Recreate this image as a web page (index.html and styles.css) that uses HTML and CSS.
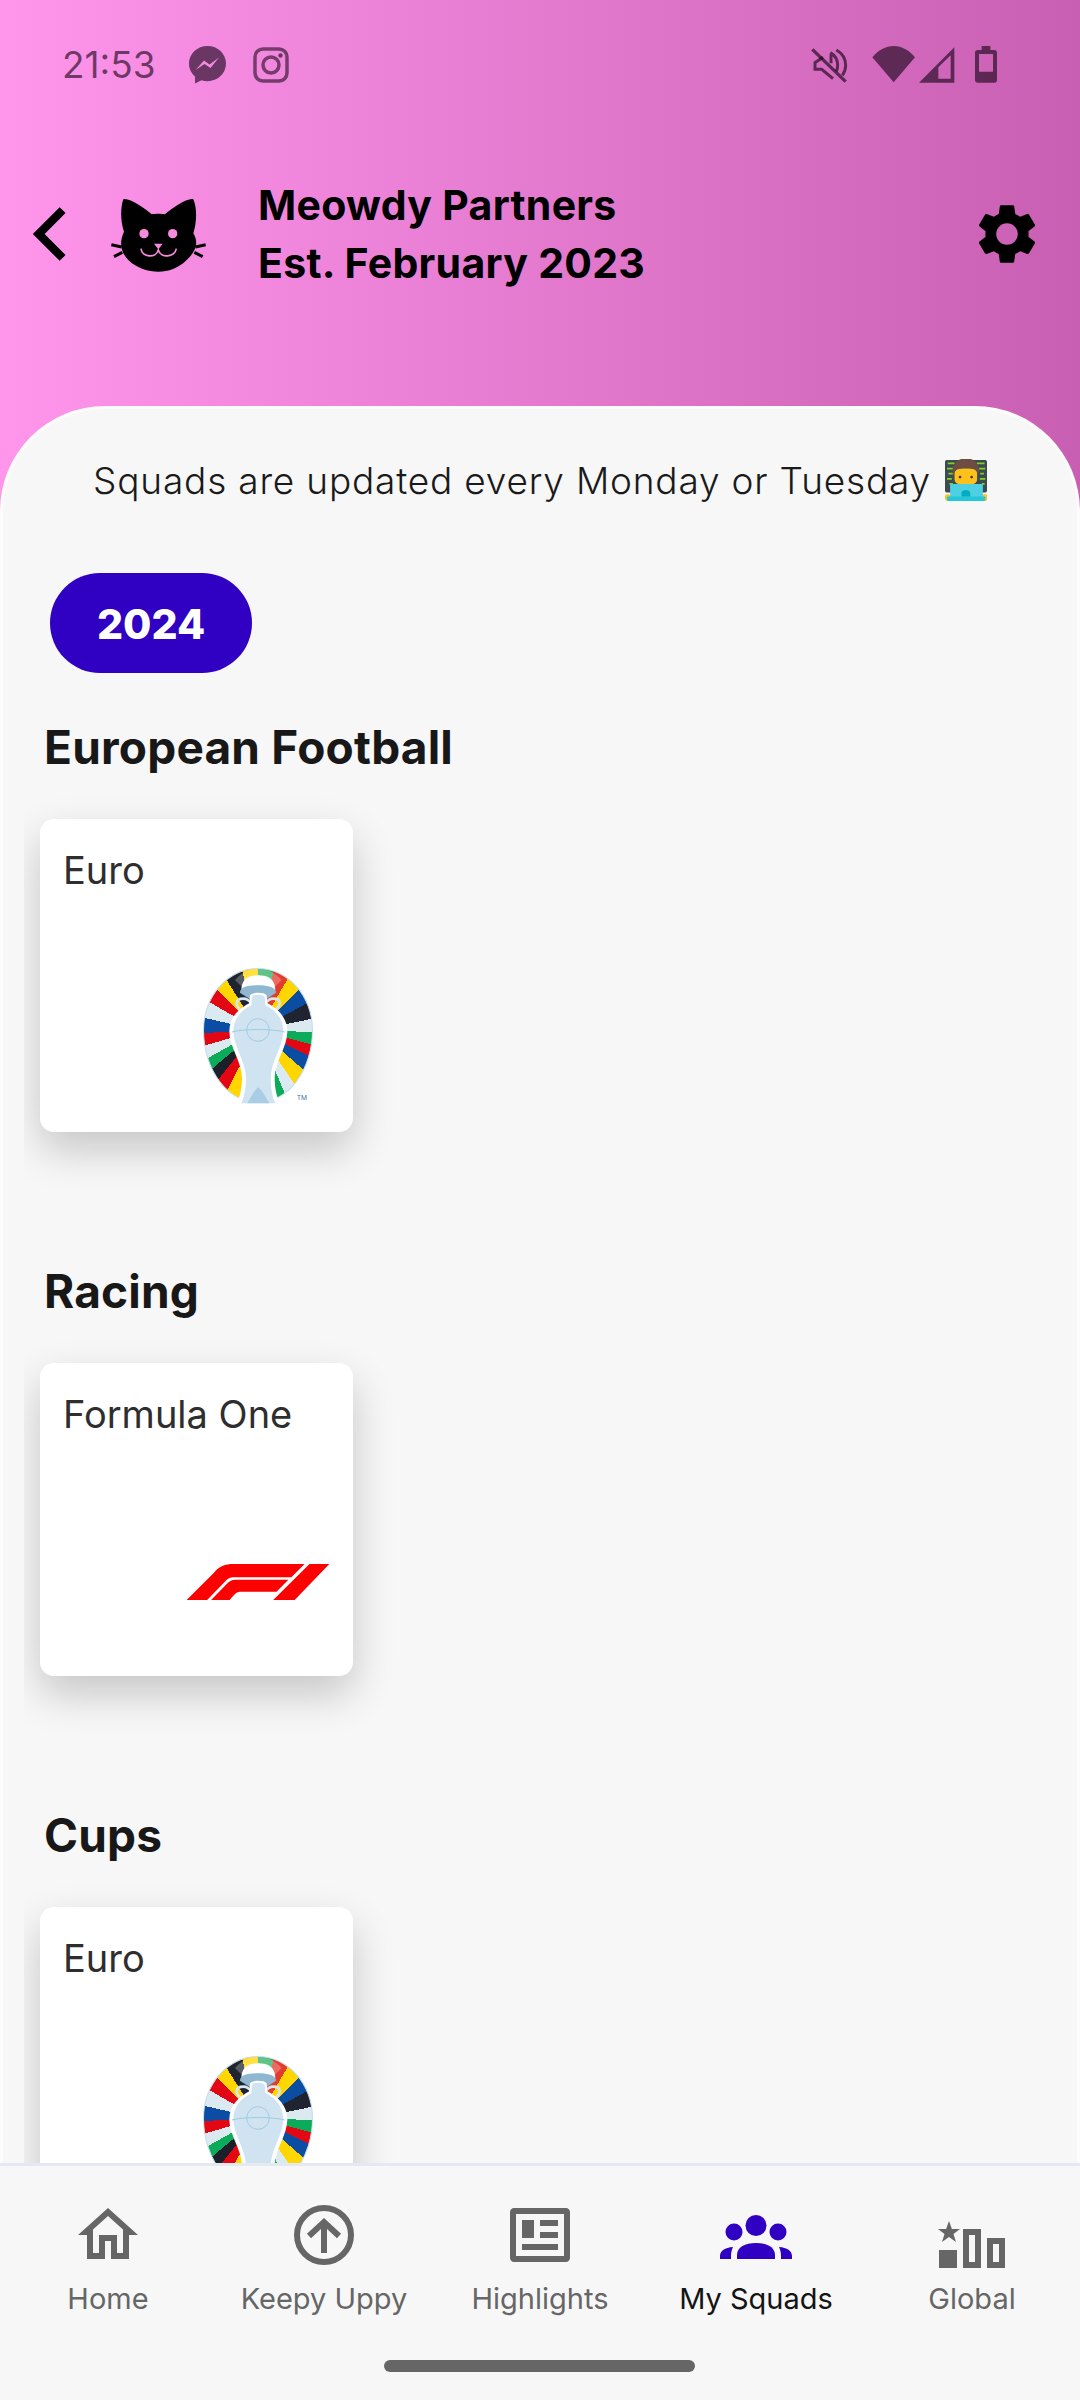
FILE: index.html
```html
<!DOCTYPE html>
<html lang="en">
<head>
<meta charset="utf-8">
<title>Meowdy Partners</title>
<link rel="stylesheet" href="styles.css">
</head>
<body>
<svg class="defs" width="0" height="0" aria-hidden="true">
  <defs>
    <symbol id="f1" viewBox="558 8 432 109">
      <path d="M558 117L640 35C655 15 675 8 700 8H915L875 48H700C690 48 685 50 675 60L620 117Z"/>
      <path d="M632 117L680 68C688 60 695 56 705 56H866L830 92H720C712 92 706 97 700 103L688 117Z"/>
      <path d="M930 8H990L885 117H820Z"/>
    </symbol>
    <symbol id="trophy" viewBox="129 54 330 408">
      <path class="t-wash" d="M225 90C245 66 270 57 294 57C318 57 345 66 365 90L345 110H245Z"/>
      <path class="t-white" d="M244 122C244 88 262 76 294 76C326 76 346 88 346 122Z"/>
      <path class="t-collar" d="M240 128C240 112 262 106 294 106C326 106 348 112 348 128C330 140 322 145 318 150H272C268 145 258 140 240 128Z"/>
      <path class="t-handle" d="M248 182C222 168 226 146 250 146C262 146 268 152 274 160"/>
      <path class="t-handle" d="M342 182C366 168 364 146 340 146C328 146 322 152 316 160"/>
      <path class="t-white" d="M270 136C276 126 314 126 320 136L322 160C354 176 382 204 382 244C382 292 344 336 344 384C344 420 352 446 362 462H228C238 446 246 420 246 384C246 336 208 292 208 244C208 204 236 176 268 160Z"/>
      <path class="t-body" d="M276 140C282 132 308 132 314 140L316 166C346 180 370 206 370 244C370 288 332 336 332 384C332 416 338 442 346 460H244C252 442 258 416 258 384C258 336 220 288 220 244C220 206 244 180 274 166Z"/>
      <path class="t-base" d="M262 460C274 440 284 420 295 412C306 420 316 440 328 460Z"/>
      <circle class="t-line" cx="294" cy="240" r="34"/>
      <path class="t-line" d="M216 246C250 236 340 236 374 246"/>
      <text class="t-tm" x="410" y="449">TM</text>
    </symbol>
  </defs>
</svg>
<div class="screen">
  <header class="hero">
    <div class="status">
      <div class="status-left">
        <span class="time">21:53</span>
        <svg class="st-icon messenger" viewBox="0 0 37 38"><path class="st-fill" d="M18.5 0C8.3 0 0 7.7 0 17.6 0 22.9 2.300 27.400 6 30.500V37.500L12.500 34.200C14.400 34.800 16.400 35.200 18.500 35.200 28.700 35.200 37 27.500 37 17.600 37 7.700 28.700 0 18.500 0Z"/><path class="st-bolt" d="M6.500 24L15 14.500 20.500 18.500 30 11.500 21.500 22 15.500 18Z"/></svg>
        <svg class="st-icon insta" viewBox="0 0 36 36"><rect class="st-stroke" x="2" y="2" width="32" height="32" rx="8"/><circle class="st-stroke" cx="18" cy="18" r="8"/><circle class="st-fill" cx="27.500" cy="8.500" r="2.200"/></svg>
      </div>
      <svg class="sys-icons" viewBox="0 0 660 210">
        <path class="sys-line" d="M40 58L140 155"/>
        <path class="sys-thin" d="M72 82L48 98V118H68L102 146M96 72V100M94 68C108 76 116 90 116 106C116 112 115 118 112 124M112 60C130 70 140 88 140 106C140 118 136 128 130 136"/>
        <path class="st-fill" d="M220 82C238 60 260 48 284 48C308 48 330 60 348 82L284 157Z"/>
        <path class="st-fill" fill-rule="evenodd" d="M360 158L466 52V158ZM418 112V146H455V76Z"/>
        <path class="st-fill" fill-rule="evenodd" d="M548 48H574V60H586C591 60 594 63 594 68V150C594 155 591 158 586 158H536C531 158 528 155 528 150V68C528 63 531 60 536 60H548ZM540 72V125H582V72Z"/>
      </svg>
    </div>
    <div class="appbar">
      <svg class="back" viewBox="0 0 24 24"><path d="M17.51 3.87L15.73 2.1 5.84 12l9.9 9.9 1.77-1.77L9.38 12l8.13-8.130z"/></svg>
      <svg class="cat" viewBox="0 12 420 360">
        <path class="cat-head" d="M100 88C115 82 165 115 185 133C195 131 215 131 225 133C245 115 295 82 310 88C320 110 322 150 310 190C325 215 322 240 290 270C265 295 235 305 205 305C175 305 140 295 115 270C90 245 88 215 102 185C90 150 92 110 100 88Z"/>
        <path class="cat-whisk" d="M64 224L95 231M72 260L97 247M347 224L316 231M338 260L313 247"/>
        <circle class="cat-pink" cx="162" cy="191" r="14"/>
        <circle class="cat-pink" cx="248" cy="191" r="14"/>
        <path class="cat-pink" d="M192 221H218L205 238Z"/>
        <path class="cat-mouth" d="M153 236C155 262 198 266 205 240C212 266 255 262 259 236"/>
      </svg>
      <div class="title">
        <div>Meowdy Partners</div>
        <div>Est. February 2023</div>
      </div>
      <svg class="gear" viewBox="0 0 24 24"><path d="M19.14 12.94c.04-.3.06-.61.06-.94 0-.32-.02-.64-.07-.94l2.030-1.580c.18-.14.23-.41.12-.61l-1.920-3.320c-.12-.22-.37-.29-.59-.22l-2.390.96c-.5-.38-1.030-.7-1.620-.94l-.36-2.540c-.04-.24-.24-.41-.48-.41h-3.840c-.24 0-.43.17-.47.41l-.36 2.540c-.59.24-1.130.57-1.620.94l-2.390-.96c-.22-.08-.47 0-.59.22L2.740 8.870c-.12.21-.08.47.12.61l2.030 1.580c-.05.3-.09.63-.09.94s.02.64.07.94l-2.030 1.580c-.18.14-.23.41-.12.61l1.920 3.320c.12.22.37.29.59.22l2.390-.96c.5.38 1.030.7 1.620.94l.36 2.540c.05.24.24.41.48.41h3.840c.24 0 .44-.17.47-.41l.36-2.540c.59-.24 1.130-.56 1.620-.94l2.390.96c.22.08.47 0 .59-.22l1.920-3.320c.12-.22.07-.47-.12-.61l-2.010-1.580zM12 15.600c-1.980 0-3.600-1.620-3.600-3.600s1.620-3.600 3.600-3.600 3.600 1.620 3.600 3.600-1.620 3.600-3.600 3.600z"/></svg>
    </div>
  </header>
  <main class="sheet">
    <div class="notice">
      <span>Squads are updated every Monday or Tuesday</span>
      <svg class="emoji" viewBox="132 62 123 123" role="img" aria-label="technologist">
        <rect x="132" y="65" width="123" height="95" rx="5" fill="#3d4a50"/>
        <path d="M140 75H160M225 75H248M138 90H155M232 90H250M142 105H156M235 105H246M138 120H152M234 120H250M145 135H155M240 135H248" stroke="#7ed321" stroke-width="5" fill="none"/>
        <rect x="160" y="90" width="66" height="46" rx="14" fill="#fcc21b"/>
        <path d="M155 108C150 75 170 60 193 60C218 60 236 75 231 108C226 94 215 88 193 88C172 88 160 94 155 108Z" fill="#6d4c41"/>
        <circle cx="176" cy="115" r="4" fill="#4e342e"/><circle cx="210" cy="115" r="4" fill="#4e342e"/>
        <rect x="132" y="165" width="16" height="20" rx="7" fill="#fcc21b"/><rect x="240" y="165" width="16" height="20" rx="7" fill="#fcc21b"/>
        <rect x="147" y="135" width="96" height="50" rx="3" fill="#4dd0e1"/>
        <rect x="138" y="172" width="112" height="13" rx="3" fill="#26c6da"/>
        <path d="M180 172V162C180 150 206 150 206 162V172Z" fill="#00acc1"/>
      </svg>
    </div>
    <button class="pill" type="button">2024</button>

    <section class="group">
      <h2 class="group-title">European Football</h2>
      <div class="card-row">
        <article class="card">
          <h3 class="card-name">Euro</h3>
          <div class="logo-slot"><div class="euro"><div class="euro-fan"></div><svg class="euro-cup"><use href="#trophy"/></svg></div></div>
        </article>
      </div>
    </section>

    <section class="group">
      <h2 class="group-title">Racing</h2>
      <div class="card-row">
        <article class="card">
          <h3 class="card-name">Formula One</h3>
          <div class="logo-slot f1-slot"><svg class="f1"><use href="#f1"/></svg></div>
        </article>
      </div>
    </section>

    <section class="group">
      <h2 class="group-title">Cups</h2>
      <div class="card-row">
        <article class="card">
          <h3 class="card-name">Euro</h3>
          <div class="logo-slot"><div class="euro"><div class="euro-fan"></div><svg class="euro-cup"><use href="#trophy"/></svg></div></div>
        </article>
      </div>
    </section>
  </main>
  <nav class="tabbar">
    <div class="tabs">
      <div class="tab">
        <svg class="tab-icon" viewBox="0 0 24 24"><path d="M12 5.690l5 4.500V18h-2v-6H9v6H7v-7.810l5-4.500M12 3L2 12h3v8h6v-6h2v6h6v-8h3L12 3z"/></svg>
        <span class="tab-label">Home</span>
      </div>
      <div class="tab">
        <svg class="tab-icon" viewBox="0 0 72 72"><circle class="ic-stroke" cx="36" cy="36" r="27"/><path class="ic-stroke" d="M36 54V24M21 37L36 23L51 37"/></svg>
        <span class="tab-label">Keepy Uppy</span>
      </div>
      <div class="tab">
        <svg class="tab-icon" viewBox="0 0 72 72"><path fill-rule="evenodd" d="M10 9H62C64.200 9 66 10.800 66 13V59C66 61.200 64.200 63 62 63H10C7.800 63 6 61.200 6 59V13C6 10.800 7.800 9 10 9ZM12 15V57H60V15ZM18 21H30V39H18ZM36 21H54V27H36ZM36 33H54V39H36ZM18 45H54V51H18Z"/></svg>
        <span class="tab-label">Highlights</span>
      </div>
      <div class="tab active">
        <svg class="tab-icon" viewBox="0 0 72 72"><circle cx="36" cy="26.500" r="10.500"/><circle cx="14" cy="33" r="8.500"/><circle cx="58" cy="33" r="8.500"/><path d="M17 60V56C17 48 25 44 36 44S55 48 55 56V60Z"/><path d="M0 60V57C0 52 5 48.500 13 48C12 50 11 53 11 57V60Z"/><path d="M72 60V57C72 52 67 48.500 59 48C60 50 61 53 61 57V60Z"/></svg>
        <span class="tab-label">My Squads</span>
      </div>
      <div class="tab">
        <svg class="tab-icon" viewBox="0 0 72 72"><path d="M13 22L15.900 30H24L17.500 35L20 43L13 38L6 43L8.500 35L2 30H10.100Z"/><rect x="3" y="51" width="18" height="18"/><path fill-rule="evenodd" d="M27 30H45V69H27ZM33 36V63H39V36ZM51 39H69V69H51ZM57 45V63H63V45Z"/></svg>
        <span class="tab-label">Global</span>
      </div>
    </div>
    <div class="home-bar"></div>
  </nav>
</div>
</body>
</html>
```
FILE: styles.css
```css
* { box-sizing: border-box; }
html, body { margin: 0; padding: 0; }
body { font-family: "Inter", "Liberation Sans", sans-serif; background: #f7f7f8; }
.defs { position: absolute; }
.screen { width: 1080px; height: 2400px; display: flex; flex-direction: column; overflow: hidden; background: linear-gradient(90deg, #ff96ec 0%, #c95fb2 100%); }

.hero { height: 406px; flex: none; }
.status { height: 129px; display: flex; justify-content: space-between; align-items: center; padding: 0 60px 0 62px; color: rgba(25, 5, 25, .63); }
.status-left { display: flex; align-items: center; }
.time { font-size: 37px; line-height: 44px; width: 127px; font-family: "Inter", sans-serif; }
.st-icon { display: block; }
.messenger { width: 37px; height: 38px; margin-right: 27px; }
.insta { width: 36px; height: 36px; }
.st-fill { fill: rgba(25, 5, 25, .63); }
.st-bolt { fill: #f28bdd; }
.st-stroke { fill: none; stroke: rgba(25, 5, 25, .58); stroke-width: 3.500; }
.sys-icons { width: 220px; height: 70px; margin-right: 1px; }
.sys-line { fill: none; stroke: rgba(25, 5, 25, .65); stroke-width: 10; }
.sys-thin { fill: none; stroke: rgba(25, 5, 25, .65); stroke-width: 9; }

.appbar { height: 210px; display: flex; align-items: center; padding: 0 37px 0 19px; }
.back { width: 62px; height: 62px; flex: none; }
.back path { stroke: #000; stroke-width: .7; }
.cat { width: 140px; height: 120px; flex: none; margin-left: 9px; }
.cat-head { fill: #000; }
.cat-whisk { fill: none; stroke: #000; stroke-width: 9; }
.cat-pink { fill: #f68bdd; }
.cat-mouth { fill: none; stroke: #f68bdd; stroke-width: 5; }
.title { margin-left: 28px; font-size: 41px; line-height: 58px; font-weight: 700; letter-spacing: .3px; color: #000; }
.gear { width: 72px; height: 72px; margin-left: auto; flex: none; }

.sheet { flex: 1; min-height: 0; overflow: hidden; background: #f7f7f8; border: 3px solid #fcfcfc; border-bottom: 0; border-radius: 105px 105px 0 0; }
.notice { margin-top: 49px; height: 44px; display: flex; justify-content: center; align-items: center; gap: 14px; font-size: 37px; font-weight: 300; letter-spacing: .8px; color: #1a1a1a; }
.emoji { width: 42px; height: 42px; flex: none; }
.pill { display: block; margin: 71px 0 0 47px; width: 202px; height: 100px; border: 0; border-radius: 50px; background: #3000c3; color: #fff; font: 800 41px/102px "Inter", sans-serif; padding: 0; }
.group-title { margin: 46px 0 0 41px; height: 56px; font-size: 46px; line-height: 56px; font-weight: 700; letter-spacing: .2px; color: #181818; }
.group + .group .group-title { margin-top: 41px; }
.card-row { margin: 20px 0 0 21px; padding: 24px 0 90px 16px; overflow: hidden; }
.card { width: 313px; height: 313px; background: #fff; border-radius: 14px; box-shadow: 0 18px 42px rgba(0, 0, 0, .2); padding: 28px 15px 28px 23px; display: flex; flex-direction: column; }
.card-name { margin: 0; font-size: 38px; line-height: 47px; font-weight: 400; color: #2e2e2e; }
.logo-slot { margin-top: auto; display: flex; justify-content: flex-end; }
.f1-slot { margin-bottom: 48px; padding-right: 8px; }
.euro { position: relative; width: 110px; height: 136px; margin-right: 25px; }
.euro-fan { position: absolute; inset: 0 0 1px 0; border-radius: 50% 50% 50% 50% / 46% 46% 54% 54%; border: 1px solid #c3dcea; background: conic-gradient(from -15deg at 50% 46%, #ffd600 0 15deg, #2fae5f 15deg 30deg, #e53b2c 30deg 45deg, #ffd600 45deg 60deg, #0a4da2 60deg 76deg, #1f2430 76deg 93deg, #dbe9f1 93deg 107deg, #0cab59 107deg 120deg, #e30613 120deg 132deg, #0a4da2 132deg 146deg, #ffd600 146deg 161deg, #dbe9f1 161deg 172deg, #0cab59 172deg 195deg, #ffd600 195deg 222deg, #e30613 222deg 234deg, #1a1f2a 234deg 245deg, #0cab59 245deg 256deg, #dbe9f1 256deg 269deg, #e30613 269deg 282deg, #0a4da2 282deg 298deg, #dbe9f1 298deg 315deg, #e30613 315deg 330deg, #ffd600 330deg 343deg, #1f2430 343deg 360deg); }
.euro-cup { position: absolute; inset: 0; width: 110px; height: 136px; }
.t-wash { fill: rgba(255, 255, 255, .25); }
.t-white { fill: #fff; }
.t-collar { fill: #8fb7d0; }
.t-handle { fill: none; stroke: #d5e6f1; stroke-width: 8; }
.t-body { fill: #cfe3f1; }
.t-base { fill: #a9cde4; }
.t-line { fill: none; stroke: #a3cbe3; stroke-width: 3; }
.t-tm { font: 400 20px "Inter", sans-serif; fill: #3f76a8; }
.f1 { width: 144px; height: 36px; fill: #ff0000; display: block; }

.tabbar { flex: none; height: 237px; background: #f7f7f8; border-top: 3px solid #e4e8f0; position: relative; z-index: 1; }
.tabs { display: grid; grid-template-columns: repeat(5, 216px); padding-top: 33px; }
.tab { display: flex; flex-direction: column; align-items: center; color: #666; }
.tab-icon { width: 72px; height: 72px; fill: #666; display: block; }
.ic-stroke { fill: none; stroke: #666; stroke-width: 6; }
.tab-label { margin-top: 10px; font-size: 29px; line-height: 36px; }
.tab.active { color: #141414; }
.tab.active .tab-icon { fill: #3000c3; }
.home-bar { width: 311px; height: 12px; border-radius: 6px; background: #666; margin: 43px 0 0 384px; }
```
